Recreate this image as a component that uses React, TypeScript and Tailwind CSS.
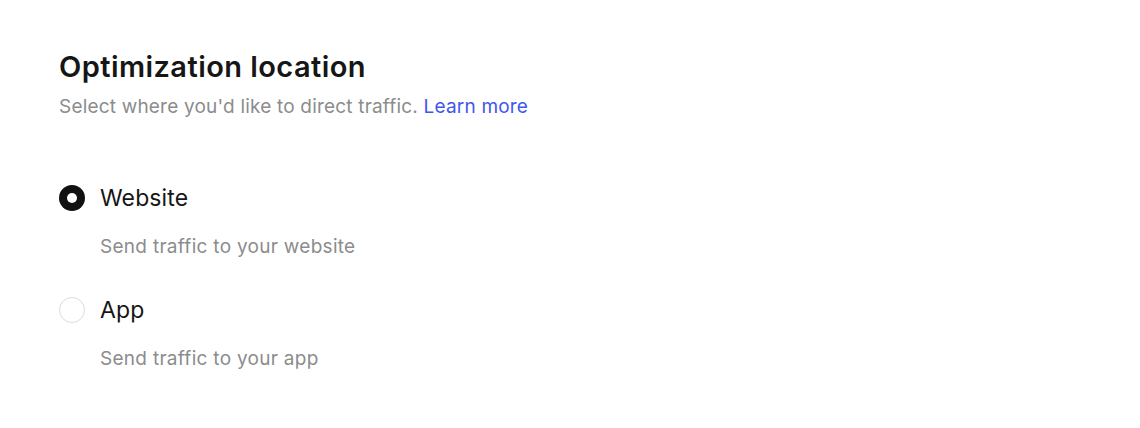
const OPTIONS = [
  { id: "website", label: "Website", hint: "Send traffic to your website" },
  { id: "app", label: "App", hint: "Send traffic to your app" },
];

function Radio({ checked }: { checked: boolean }) {
  return checked ? (
    <span className="flex h-[26px] w-[26px] shrink-0 items-center justify-center rounded-full bg-[#111111]">
      <span className="h-[10px] w-[10px] rounded-full bg-white" />
    </span>
  ) : (
    <span className="h-[26px] w-[26px] shrink-0 rounded-full border border-[#dcdcdc] bg-white" />
  );
}

export default function App() {
  const selected = "website";
  return (
    <div className="h-[428px] w-full bg-white px-[59px] pt-[48px] font-['Inter',sans-serif]">
      <h2 className="text-[29px] font-semibold leading-[38px] tracking-[0.015em] text-[#161616]">
        Optimization location
      </h2>
      <p className="mt-[9px] text-[19px] leading-[24px] tracking-[0.01em] text-[#8c8c8c]">
        Select where you'd like to direct traffic.{" "}
        <a className="text-[#3f56f0]" href="#">
          Learn more
        </a>
      </p>

      <div className="mt-[65px] flex flex-col gap-[37px]">
        {OPTIONS.map((opt) => (
          <div key={opt.id}>
            <div className="flex items-center gap-[15px]">
              <Radio checked={opt.id === selected} />
              <span className="text-[23px] leading-[28px] tracking-[0.005em] text-[#161616]">
                {opt.label}
              </span>
            </div>
            <p className="mt-[23px] pl-[41px] text-[19px] leading-[24px] tracking-[0.015em] text-[#8c8c8c]">
              {opt.hint}
            </p>
          </div>
        ))}
      </div>
    </div>
  );
}
